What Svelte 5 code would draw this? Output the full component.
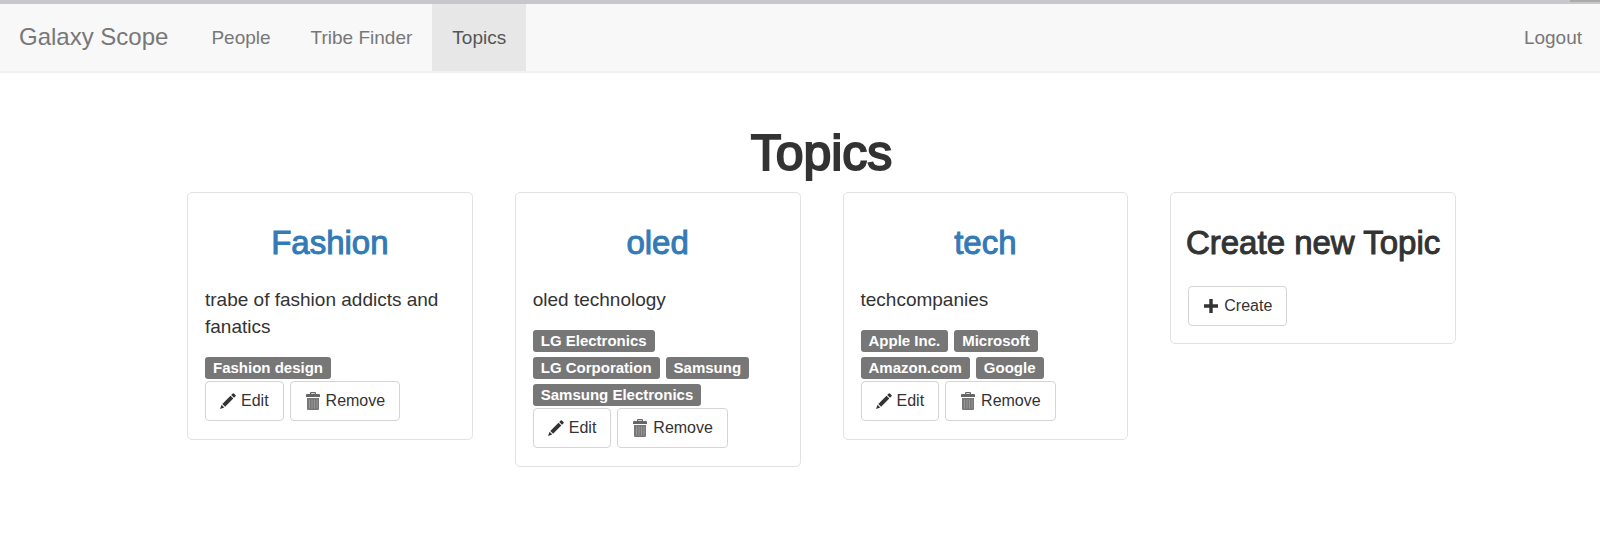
<script>
  const links = [
    { label: 'People', active: false },
    { label: 'Tribe Finder', active: false },
    { label: 'Topics', active: true }
  ];

  const topics = [
    {
      name: 'Fashion',
      description: 'trabe of fashion addicts and fanatics',
      tags: ['Fashion design']
    },
    {
      name: 'oled',
      description: 'oled technology',
      tags: ['LG Electronics', 'LG Corporation', 'Samsung', 'Samsung Electronics']
    },
    {
      name: 'tech',
      description: 'techcompanies',
      tags: ['Apple Inc.', 'Microsoft', 'Amazon.com', 'Google']
    }
  ];
</script>

<div class="strip"><span class="strip-end"></span></div>
<nav class="navbar">
  <a class="brand" href="#home">Galaxy Scope</a>
  <ul class="nav">
    {#each links as link}
      <li><a class="nav-link" class:active={link.active} href="#nav">{link.label}</a></li>
    {/each}
  </ul>
  <a class="nav-link logout" href="#logout">Logout</a>
</nav>

<main class="container">
  <h1>Topics</h1>
  <div class="row">
    {#each topics as topic}
      <section class="card">
        <h3><a href="#topic">{topic.name}</a></h3>
        <div class="caption">
          <p class="description">{topic.description}</p>
          <div class="tags">
            {#each topic.tags as tag}
              <span class="tag">{tag}</span>
            {/each}
          </div>
          <div class="actions">
            <button class="btn" type="button">
              <svg class="icon" viewBox="0 0 16 16" aria-hidden="true">
                <path d="M0 16l1.600-4.200 2.600 2.600zM2.300 10.900l8.200-8.200 2.800 2.800-8.200 8.200zM11.200 2l1.500-1.500q.6-.6 1.200 0l1.600 1.600q.6.600 0 1.200L14 4.800z" />
              </svg>
              Edit
            </button>
            <button class="btn" type="button">
              <svg class="icon trash" viewBox="0 0 16 18" aria-hidden="true">
                <path d="M5 2V1q0-1 1-1h4q1 0 1 1v1h3q1 0 1 1v2H1V3q0-1 1-1h4.200h3.600v-.8H6.200V2z" />
                <path class="bin" d="M2 6h12v11q0 1-1 1H3q-1 0-1-1z" />
                <path class="slats" d="M4.500 7.500v9M7 7.500v9M9.500 7.500v9M12 7.500v9" />
              </svg>
              Remove
            </button>
          </div>
        </div>
      </section>
    {/each}
    <section class="card">
      <h3>Create new Topic</h3>
      <div class="caption">
        <button class="btn" type="button">
          <svg class="icon" viewBox="0 0 16 16" aria-hidden="true">
            <path d="M6.300 1h3.400v5.300H15v3.400H9.700V15H6.300V9.700H1V6.300h5.300z" />
          </svg>
          Create
        </button>
      </div>
    </section>
  </div>
</main>

<style>
  :global(body) {
    margin: 0;
    background: #fff;
    color: #333;
    font-family: "Liberation Sans", Arial, sans-serif;
    font-size: 19px;
    line-height: 27px;
  }
  a {
    color: #337ab7;
    text-decoration: none;
  }
  .strip {
    display: flex;
    justify-content: flex-end;
    height: 4px;
    background: #c8c7cb;
  }
  .strip-end {
    width: 30px;
    height: 2px;
    background: #aaa;
  }
  .navbar {
    display: flex;
    background: #f8f8f8;
    border-bottom: 2px solid #f1f1f1;
  }
  .brand {
    padding: 19px 23px 21px 19px;
    color: #777;
    font-size: 24px;
  }
  .nav {
    display: flex;
    margin: 0;
    padding: 0;
    list-style: none;
  }
  .nav-link {
    display: block;
    padding: 20px;
    color: #777;
  }
  .nav-link.active {
    background: #e7e7e7;
    color: #555;
  }
  .logout {
    margin-left: auto;
    padding-right: 18px;
  }
  .container {
    max-width: 1269px;
    margin: 0 auto;
    padding: 53px 20px 40px 63px;
  }
  h1,
  h3 {
    font-weight: 400;
    text-align: center;
    white-space: nowrap;
    -webkit-text-stroke: 1px;
  }
  h1 {
    margin: 0 0 12px;
    font-size: 50px;
    line-height: 54px;
    -webkit-text-stroke: 2px;
  }
  h3 {
    margin: 27px 0 14px;
    font-size: 33px;
    line-height: 36px;
  }
  .row {
    display: grid;
    grid-template-columns: repeat(4, 1fr);
    align-items: start;
    gap: 42px;
  }
  .card {
    padding: 5px;
    border: 1px solid #e2e2e2;
    border-radius: 5px;
  }
  .caption {
    padding: 11px 12px 12px;
  }
  .description {
    margin: 0 0 14px;
  }
  .tags {
    display: flex;
    flex-wrap: wrap;
    gap: 5px 6px;
    padding-top: 3px;
  }
  .tag {
    padding: 0 8px;
    border-radius: 3px;
    background: #777;
    color: #fff;
    font-size: 15px;
    font-weight: 700;
    line-height: 22px;
  }
  .actions {
    display: flex;
    gap: 6px;
    margin: 2px 0 1px;
  }
  .btn {
    display: flex;
    align-items: center;
    gap: 5px;
    padding: 7px 14px;
    border: 1px solid #d4d4d4;
    border-radius: 4px;
    background: #fff;
    color: #333;
    font-family: inherit;
    font-size: 16px;
    line-height: 24px;
  }
  .icon {
    width: 16px;
    height: 16px;
    fill: currentColor;
  }
  .trash {
    height: 18px;
    fill: #666;
  }
  .bin {
    fill: #777;
  }
  .slats {
    stroke: #999;
    stroke-width: 1;
  }
</style>
